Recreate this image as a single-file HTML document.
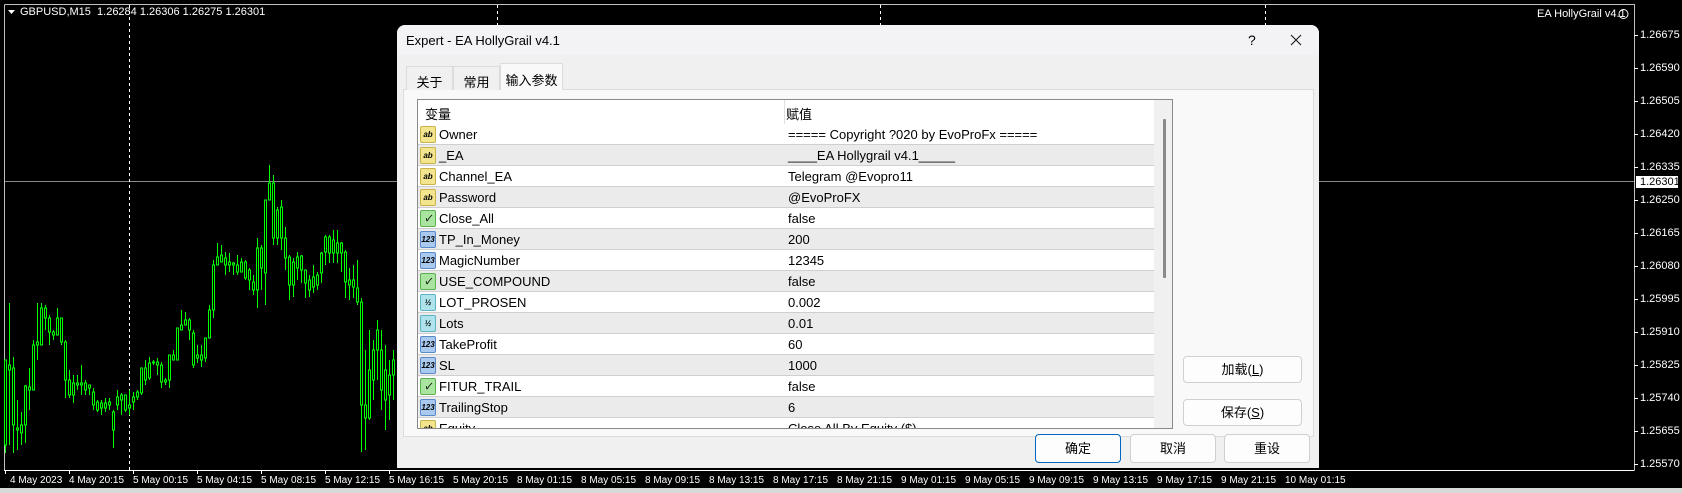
<!DOCTYPE html>
<html><head><meta charset="utf-8"><style>
*{margin:0;padding:0;box-sizing:border-box}
body{width:1682px;height:493px;background:#000;position:relative;overflow:hidden;font-family:"Liberation Sans","Noto Sans CJK SC",sans-serif}
.ab{position:absolute;white-space:nowrap}
.ct{color:#fff;font-size:11px}
.pl{position:absolute;left:1640px;color:#fff;font-size:11px;line-height:12px}
.tl span{font-size:10px}
.dlg{position:absolute;left:397px;top:25px;width:922px;height:443px;background:#f0f0f0;border-radius:8px 8px 0 0;overflow:hidden;color:#000}
.tb{position:absolute;left:0;top:0;width:922px;height:30px;background:#f3f3f6}
.tab{position:absolute;top:41px;height:24px;border:1px solid #dcdcdc;border-bottom:none;background:#f0f0f0;font-size:13px;padding:5px 0 0 0;text-align:center}
.panel{position:absolute;left:6px;top:64px;width:911px;height:348px;background:#f9f9f9;border:1px solid #dcdcdc}
.tbl{position:absolute;left:20px;top:74px;width:756px;height:330px;background:#fff;border:1px solid #8a8a8a;overflow:hidden}
.row{position:absolute;left:0;width:736px;height:21px;border-bottom:1px solid #cfcfcf;font-size:13px}
.row span{position:absolute;top:3px}
.ic{position:absolute;left:2px;top:2px;width:16px;height:17px;border-radius:2px;font-size:8px;font-weight:bold;text-align:center;line-height:15px}
.btn{position:absolute;background:#fdfdfd;border:1px solid #d0d0d0;border-radius:4px;font-size:13px;text-align:center;line-height:25px}
</style></head><body>
<svg width="1682" height="493" style="position:absolute;left:0;top:0">
<rect x="0" y="488" width="1682" height="5" fill="#d8d8d8"/>
<path d="M4.5 4.5H1634.5V470.5M4.5 4.5V470.5H1634.5" stroke="#c0c0c0" fill="none"/>
<path d="M4 470.5H1634" stroke="#fff"/>
<path d="M5 181.5H1634" stroke="#888"/>
<path d="M129.5 5V470M497.5 5V26M880.5 5V26M1265.5 5V26" stroke="#fff" stroke-dasharray="3,3"/>
<g stroke="#fff">
<path d="M1634 35.5h4M1634 68.5h4M1634 101.5h4M1634 134.5h4M1634 167.5h4M1634 200.5h4M1634 233.5h4M1634 266.5h4M1634 299.5h4M1634 332.5h4M1634 365.5h4M1634 398.5h4M1634 431.5h4M1634 464.5h4"/>
<path d="M5.5 470v4M69.5 470v4M133.5 470v4M197.5 470v4M261.5 470v4M325.5 470v4M389.5 470v4"/>
</g>
<path d="M8 10h7l-3.5 4z" fill="#fff"/>
<rect x="1636" y="176" width="42" height="12" fill="#fff"/>
<circle cx="1623.5" cy="14" r="4.5" stroke="#fff" fill="none"/>
<g stroke="#00ff00" stroke-width="1" fill="none">
<path d="M5.5 360V453M9.5 303V445M13.5 357V453M17.5 400V450M21.5 412V445M25.5 385V443M29.5 368V410M33.5 340V385M37.5 303V360M41.5 303V345M45.5 305V330M49.5 315V345M53.5 330V340M57.5 308V335M61.5 318V345M65.5 340V398M69.5 370V398M73.5 375V403M77.5 375V390M81.5 365V395M85.5 380V395M89.5 385V395M93.5 388V410M97.5 400V412M101.5 400V415M105.5 398V412M109.5 398V410M113.5 410V448M117.5 390V410M121.5 393V415M125.5 395V412M129.5 390V415M133.5 392V410M137.5 390V400M141.5 368V395M145.5 360V385M149.5 357V380M153.5 360V365M157.5 358V375M161.5 362V388M165.5 378V385M169.5 355V388M173.5 350V360M177.5 328V360M181.5 310V330M185.5 312V325M189.5 318V340M193.5 330V368M197.5 345V363M201.5 345V367M205.5 338V362M209.5 305V338M213.5 260V318M217.5 243V265M221.5 245V262M225.5 252V275M229.5 253V272M233.5 262V275M237.5 255V275M241.5 258V272M245.5 260V280M249.5 268V290M253.5 275V295M257.5 238V308M261.5 245V290M265.5 200V305M269.5 165V200M273.5 175V245M277.5 207V245M281.5 200V250M285.5 227V270M289.5 255V300M293.5 258V297M297.5 252V280M301.5 255V283M305.5 270V298M309.5 275V297M313.5 265V293M317.5 272V290M321.5 252V283M325.5 235V265M329.5 235V263M333.5 230V263M337.5 230V263M341.5 242V272M345.5 250V298M349.5 268V300M353.5 265V298M357.5 260V305M361.5 298V452M365.5 350V450M369.5 330V420M373.5 340V400M377.5 320V380M381.5 330V410M385.5 345V430M389.5 360V420M393.5 350V400"/>
<path d="M4.5 360h2v85h-2zM8.5 365h2v5h-2zM12.5 368h2v57h-2zM16.5 428h2v2h-2zM20.5 425h2v8h-2zM24.5 386h2v39h-2zM28.5 387h2v3h-2zM32.5 345h2v45h-2zM36.5 342h2v3h-2zM40.5 308h2v37h-2zM44.5 308h2v10h-2zM48.5 318h2v14h-2zM52.5 332h2v3h-2zM56.5 318h2v17h-2zM60.5 318h2v24h-2zM64.5 342h2v38h-2zM68.5 380h2v15h-2zM72.5 383h2v12h-2zM76.5 383h2v2h-2zM80.5 383h2v2h-2zM84.5 383h2v7h-2zM88.5 385h2v3h-2zM92.5 392h2v13h-2zM96.5 402h2v8h-2zM100.5 403h2v5h-2zM104.5 403h2v5h-2zM108.5 402h2v3h-2zM112.5 412h2v18h-2zM116.5 397h2v8h-2zM120.5 395h2v5h-2zM124.5 395h2v15h-2zM128.5 405h2v3h-2zM132.5 397h2v5h-2zM136.5 392h2v5h-2zM140.5 368h2v25h-2zM144.5 368h2v12h-2zM148.5 363h2v15h-2zM152.5 362h2v1h-2zM156.5 362h2v3h-2zM160.5 365h2v17h-2zM164.5 380h2v2h-2zM168.5 355h2v25h-2zM172.5 355h2v5h-2zM176.5 328h2v32h-2zM180.5 325h2v5h-2zM184.5 320h2v5h-2zM188.5 320h2v10h-2zM192.5 333h2v32h-2zM196.5 355h2v3h-2zM200.5 355h2v5h-2zM204.5 338h2v20h-2zM208.5 310h2v28h-2zM212.5 265h2v45h-2zM216.5 257h2v8h-2zM220.5 255h2v7h-2zM224.5 258h2v7h-2zM228.5 262h2v3h-2zM232.5 263h2v2h-2zM236.5 265h2v7h-2zM240.5 262h2v10h-2zM244.5 262h2v16h-2zM248.5 270h2v10h-2zM252.5 282h2v8h-2zM256.5 248h2v42h-2zM260.5 248h2v20h-2zM264.5 200h2v73h-2zM268.5 183h2v17h-2zM272.5 183h2v55h-2zM276.5 210h2v28h-2zM280.5 207h2v31h-2zM284.5 238h2v20h-2zM288.5 257h2v28h-2zM292.5 262h2v23h-2zM296.5 257h2v11h-2zM300.5 256h2v14h-2zM304.5 270h2v13h-2zM308.5 280h2v10h-2zM312.5 277h2v10h-2zM316.5 275h2v10h-2zM320.5 253h2v20h-2zM324.5 237h2v15h-2zM328.5 237h2v16h-2zM332.5 240h2v13h-2zM336.5 243h2v10h-2zM340.5 243h2v10h-2zM344.5 252h2v30h-2zM348.5 280h2v5h-2zM352.5 280h2v7h-2zM356.5 288h2v14h-2zM360.5 302h2v103h-2zM364.5 405h2v13h-2zM368.5 370h2v48h-2zM372.5 350h2v30h-2zM376.5 330h2v20h-2zM380.5 350h2v40h-2zM384.5 370h2v30h-2zM388.5 375h2v20h-2zM392.5 360h2v15h-2z" fill="#000"/>
</g>
</svg>
<div class="ab ct" style="left:20px;top:6px">GBPUSD,M15&nbsp; 1.26284 1.26306 1.26275 1.26301</div>
<div class="ab ct" style="left:1537px;top:8px">EA HollyGrail v4.1</div>
<div class="pl" style="top:29px">1.26675</div>
<div class="pl" style="top:62px">1.26590</div>
<div class="pl" style="top:95px">1.26505</div>
<div class="pl" style="top:128px">1.26420</div>
<div class="pl" style="top:161px">1.26335</div>
<div class="pl" style="top:176px;color:#000">1.26301</div>
<div class="pl" style="top:194px">1.26250</div>
<div class="pl" style="top:227px">1.26165</div>
<div class="pl" style="top:260px">1.26080</div>
<div class="pl" style="top:293px">1.25995</div>
<div class="pl" style="top:326px">1.25910</div>
<div class="pl" style="top:359px">1.25825</div>
<div class="pl" style="top:392px">1.25740</div>
<div class="pl" style="top:425px">1.25655</div>
<div class="pl" style="top:458px">1.25570</div>
<div class="ab ct tl" style="top:475px;left:0;width:1682px;height:14px">
<span class="ab" style="left:10px">4 May 2023</span><span class="ab" style="left:69px">4 May 20:15</span><span class="ab" style="left:133px">5 May 00:15</span><span class="ab" style="left:197px">5 May 04:15</span><span class="ab" style="left:261px">5 May 08:15</span><span class="ab" style="left:325px">5 May 12:15</span><span class="ab" style="left:389px">5 May 16:15</span><span class="ab" style="left:453px">5 May 20:15</span><span class="ab" style="left:517px">8 May 01:15</span><span class="ab" style="left:581px">8 May 05:15</span><span class="ab" style="left:645px">8 May 09:15</span><span class="ab" style="left:709px">8 May 13:15</span><span class="ab" style="left:773px">8 May 17:15</span><span class="ab" style="left:837px">8 May 21:15</span><span class="ab" style="left:901px">9 May 01:15</span><span class="ab" style="left:965px">9 May 05:15</span><span class="ab" style="left:1029px">9 May 09:15</span><span class="ab" style="left:1093px">9 May 13:15</span><span class="ab" style="left:1157px">9 May 17:15</span><span class="ab" style="left:1221px">9 May 21:15</span><span class="ab" style="left:1285px">10 May 01:15</span>
</div>

<div class="dlg">
<div class="tb"></div>
<div class="ab" style="left:9px;top:8px;font-size:13px">Expert - EA HollyGrail v4.1</div>
<div class="ab" style="left:851px;top:7px;font-size:14px">?</div>
<svg class="ab" style="left:893px;top:9px" width="12" height="12"><path d="M1 1L11 11M11 1L1 11" stroke="#222" stroke-width="1.2"/></svg>
<div class="panel"></div>
<div class="tab" style="left:9px;width:47px">关于</div>
<div class="tab" style="left:56px;width:47px">常用</div>
<div class="tab" style="left:103px;top:38px;height:27px;width:63px;background:#f9f9f9;padding-top:6px">输入参数</div>
<div class="tbl">
<div class="ab" style="left:7px;top:4px;font-size:13px">变量</div>
<div class="ab" style="left:368px;top:4px;font-size:13px">赋值</div>
<div class="ab" style="left:366px;top:0;width:1px;height:25px;background:#e0e0e0"></div>
<div class="ab" style="left:736px;top:0;width:19px;height:330px;background:#f0f0f0"></div>
<div class="ab" style="left:745px;top:19px;width:3px;height:159px;background:#8a8a8a;border-radius:1px"></div>
<div class="row" style="top:24px;background:#fff"><i class="ic" style="background:#f3e58e;border:1px solid #c9b34a">ab</i><span style="left:21px">Owner</span><span style="left:370px">===== Copyright ?020 by EvoProFx =====</span></div>
<div class="row" style="top:45px;background:#ebebeb"><i class="ic" style="background:#f3e58e;border:1px solid #c9b34a">ab</i><span style="left:21px">_EA</span><span style="left:370px">____EA Hollygrail v4.1_____</span></div>
<div class="row" style="top:66px;background:#fff"><i class="ic" style="background:#f3e58e;border:1px solid #c9b34a">ab</i><span style="left:21px">Channel_EA</span><span style="left:370px">Telegram @Evopro11</span></div>
<div class="row" style="top:87px;background:#ebebeb"><i class="ic" style="background:#f3e58e;border:1px solid #c9b34a">ab</i><span style="left:21px">Password</span><span style="left:370px">@EvoProFX</span></div>
<div class="row" style="top:108px;background:#fff"><i class="ic" style="background:#a9e4a0;border:1px solid #5cb050">✓</i><span style="left:21px">Close_All</span><span style="left:370px">false</span></div>
<div class="row" style="top:129px;background:#ebebeb"><i class="ic" style="background:#a9c9ef;border:1px solid #5b8ac8">123</i><span style="left:21px">TP_In_Money</span><span style="left:370px">200</span></div>
<div class="row" style="top:150px;background:#fff"><i class="ic" style="background:#a9c9ef;border:1px solid #5b8ac8">123</i><span style="left:21px">MagicNumber</span><span style="left:370px">12345</span></div>
<div class="row" style="top:171px;background:#ebebeb"><i class="ic" style="background:#a9e4a0;border:1px solid #5cb050">✓</i><span style="left:21px">USE_COMPOUND</span><span style="left:370px">false</span></div>
<div class="row" style="top:192px;background:#fff"><i class="ic" style="background:#aee3ec;border:1px solid #5fb3c4">½</i><span style="left:21px">LOT_PROSEN</span><span style="left:370px">0.002</span></div>
<div class="row" style="top:213px;background:#ebebeb"><i class="ic" style="background:#aee3ec;border:1px solid #5fb3c4">½</i><span style="left:21px">Lots</span><span style="left:370px">0.01</span></div>
<div class="row" style="top:234px;background:#fff"><i class="ic" style="background:#a9c9ef;border:1px solid #5b8ac8">123</i><span style="left:21px">TakeProfit</span><span style="left:370px">60</span></div>
<div class="row" style="top:255px;background:#ebebeb"><i class="ic" style="background:#a9c9ef;border:1px solid #5b8ac8">123</i><span style="left:21px">SL</span><span style="left:370px">1000</span></div>
<div class="row" style="top:276px;background:#fff"><i class="ic" style="background:#a9e4a0;border:1px solid #5cb050">✓</i><span style="left:21px">FITUR_TRAIL</span><span style="left:370px">false</span></div>
<div class="row" style="top:297px;background:#ebebeb"><i class="ic" style="background:#a9c9ef;border:1px solid #5b8ac8">123</i><span style="left:21px">TrailingStop</span><span style="left:370px">6</span></div>
<div class="row" style="top:318px;background:#fff"><i class="ic" style="background:#f3e58e;border:1px solid #c9b34a">ab</i><span style="left:21px">Equity</span><span style="left:370px">Close All By Equity ($)</span></div>
</div>
<div class="btn" style="left:786px;top:331px;width:119px;height:27px">加载(<u>L</u>)</div>
<div class="btn" style="left:786px;top:374px;width:119px;height:27px">保存(<u>S</u>)</div>
<div class="btn" style="left:638px;top:409px;width:86px;height:29px;border:1px solid #0067c0;line-height:27px">确定</div>
<div class="btn" style="left:733px;top:409px;width:86px;height:29px;line-height:27px">取消</div>
<div class="btn" style="left:827px;top:409px;width:86px;height:29px;line-height:27px">重设</div>
</div>
</body></html>
